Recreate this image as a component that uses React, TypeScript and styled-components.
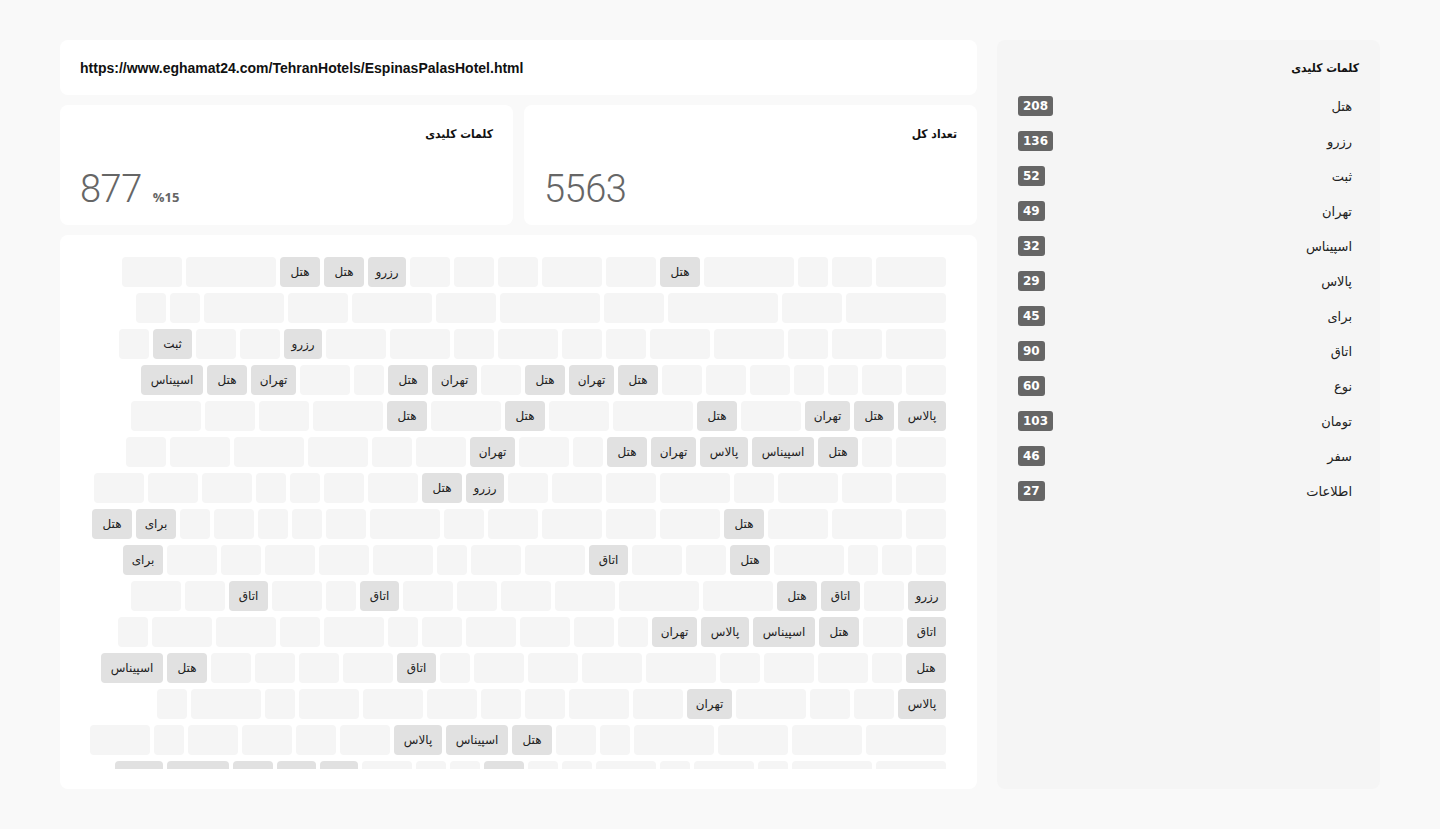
import React from 'react';
import styled, { createGlobalStyle } from 'styled-components';

const GlobalStyle = createGlobalStyle`
  * { box-sizing: border-box; }
  html, body { margin: 0; padding: 0; }
  body {
    background: #f9f9f9;
    font-family: "DejaVu Sans", sans-serif;
    color: #222;
  }
`;

const Page = styled.div`
  direction: rtl;
  display: grid;
  grid-template-columns: 383px 917px;
  grid-template-rows: minmax(0, 1fr);
  gap: 20px;
  padding: 40px 60px;
  height: 829px;
`;

const Sidebar = styled.aside`
  background: #f5f5f5;
  border-radius: 8px;
  padding: 20px 21px;
`;

const SideTitle = styled.h3`
  margin: 0 0 20px;
  font-family: "DejaVu Sans Condensed", "DejaVu Sans", sans-serif;
  font-size: 12px;
  font-weight: bold;
  line-height: 16px;
  color: #111;
`;

const KeywordList = styled.ul`
  list-style: none;
  margin: 0;
  padding: 0 7px 0 0;
  display: flex;
  flex-direction: column;
  gap: 15px;
`;

const KeywordRow = styled.li`
  display: flex;
  justify-content: space-between;
  align-items: center;
  height: 20px;
  font-size: 13px;
  color: #222;
`;

const Count = styled.span`
  background: #666;
  color: #fff;
  font-weight: bold;
  font-size: 12px;
  height: 20px;
  line-height: 20px;
  padding: 0 5px;
  border-radius: 3px;
`;

const Main = styled.main`
  display: flex;
  flex-direction: column;
  gap: 10px;
  min-width: 0;
  min-height: 0;
`;

const Card = styled.div`
  background: #fff;
  border-radius: 8px;
`;

const UrlCard = styled(Card)`
  flex: none;
  height: 55px;
  padding: 0 20px;
  display: flex;
  align-items: center;
  direction: ltr;
  font-family: "Liberation Sans", Arial, sans-serif;
  font-weight: bold;
  font-size: 14px;
  color: #111;
`;

const StatsRow = styled.div`
  flex: none;
  display: grid;
  grid-template-columns: 1fr 1fr;
  gap: 11px;
  height: 120px;
`;

const StatCard = styled(Card)`
  display: flex;
  flex-direction: column;
  justify-content: space-between;
  padding: 21px 20px 17px;
`;

const StatTitle = styled.h4`
  margin: 0;
  font-family: "DejaVu Sans Condensed", "DejaVu Sans", sans-serif;
  font-size: 12px;
  font-weight: bold;
  line-height: 16px;
  color: #111;
`;

const StatValue = styled.div`
  direction: ltr;
  display: flex;
  align-items: baseline;
  gap: 11px;
`;

const BigNumber = styled.span`
  font-family: Roboto, sans-serif;
  font-weight: 300;
  font-size: 38px;
  line-height: 1;
  letter-spacing: -0.5px;
  color: #666;
`;

const Percent = styled.span`
  font-family: "Open Sans", sans-serif;
  font-weight: bold;
  font-size: 13px;
  color: #666;
`;

const CloudCard = styled(Card)`
  flex: 1;
  min-height: 0;
  display: flex;
  padding: 22px 31px 20px 30px;
`;

const Cloud = styled.div`
  flex: 1;
  min-height: 0;
  overflow: hidden;
  display: flex;
  flex-direction: column;
  gap: 6px;
`;

const CloudRow = styled.div`
  display: flex;
  gap: 4px;
  flex-shrink: 0;
`;

const Tile = styled.span<{ $keyword: boolean }>`
  flex: none;
  height: 30px;
  border-radius: 4px;
  background: ${p => (p.$keyword ? '#e1e1e1' : '#f5f5f5')};
  display: flex;
  align-items: center;
  justify-content: center;
  font-size: 12px;
  color: #222;
  white-space: nowrap;
`;

const keywords = [
    { word: 'هتل', count: 208 },
    { word: 'رزرو', count: 136 },
    { word: 'ثبت', count: 52 },
    { word: 'تهران', count: 49 },
    { word: 'اسپیناس', count: 32 },
    { word: 'پالاس', count: 29 },
    { word: 'برای', count: 45 },
    { word: 'اتاق', count: 90 },
    { word: 'نوع', count: 60 },
    { word: 'تومان', count: 103 },
    { word: 'سفر', count: 46 },
    { word: 'اطلاعات', count: 27 },
];

const tileWidth: Record<string, number> = {
    'هتل': 40,
    'رزرو': 38,
    'ثبت': 39,
    'تهران': 45,
    'اسپیناس': 62,
    'پالاس': 48,
    'برای': 40,
    'اتاق': 39,
};

// rows read right to left: a number is a plain word (its width only),
// text is a keyword, "*n" is a keyword cut off under the fold
const rows = [
    '70 40 30 90 هتل 50 60 40 40 40 رزرو هتل هتل 90 60',
    '100 60 110 60 100 60 80 60 80 30 30',
    '60 50 40 70 60 40 40 60 40 60 60 رزرو 40 40 ثبت 30',
    '40 40 30 30 40 40 40 هتل تهران هتل 40 تهران هتل 30 50 تهران هتل اسپیناس',
    'پالاس هتل تهران 60 هتل 80 60 هتل 70 هتل 70 50 50 70',
    '50 30 هتل اسپیناس پالاس تهران هتل 30 50 تهران 50 40 60 70 60 40',
    '50 50 60 40 70 50 50 40 رزرو هتل 50 40 30 30 50 50 50',
    '40 70 60 هتل 60 50 60 50 40 70 40 30 30 40 30 برای هتل',
    '30 30 30 70 هتل 40 50 اتاق 60 50 30 60 50 50 40 50 برای',
    'رزرو 40 اتاق هتل 70 80 60 50 40 50 اتاق 30 50 اتاق 40 50',
    'اتاق 40 هتل اسپیناس پالاس تهران 30 40 50 50 40 30 60 40 60 60 30',
    'هتل 30 50 50 40 70 60 50 50 30 اتاق 50 40 40 40 هتل اسپیناس',
    'پالاس 40 40 70 تهران 50 60 40 40 50 60 60 30 70 30',
    '80 70 70 80 30 40 هتل اسپیناس پالاس 50 40 50 50 30 60',
    '70 80 30 60 30 60 30 30 *40 30 30 50 *38 *39 *40 *62 *48',
];

function parseToken(t: string) {
    if (t.startsWith('*')) return { keyword: true, label: null, width: Number(t.slice(1)) };
    if (isNaN(Number(t))) return { keyword: true, label: t, width: tileWidth[t] };
    return { keyword: false, label: null, width: Number(t) };
}

export default function App() {
    return (
        <>
            <GlobalStyle />
            <Page>
                <Sidebar>
                    <SideTitle>کلمات کلیدی</SideTitle>
                    <KeywordList>
                        {keywords.map(k => (
                            <KeywordRow key={k.word}>
                                <span>{k.word}</span>
                                <Count>{k.count}</Count>
                            </KeywordRow>
                        ))}
                    </KeywordList>
                </Sidebar>
                <Main>
                    <UrlCard>https://www.eghamat24.com/TehranHotels/EspinasPalasHotel.html</UrlCard>
                    <StatsRow>
                        <StatCard>
                            <StatTitle>تعداد کل</StatTitle>
                            <StatValue>
                                <BigNumber>5563</BigNumber>
                            </StatValue>
                        </StatCard>
                        <StatCard>
                            <StatTitle>کلمات کلیدی</StatTitle>
                            <StatValue>
                                <BigNumber>877</BigNumber>
                                <Percent>%15</Percent>
                            </StatValue>
                        </StatCard>
                    </StatsRow>
                    <CloudCard>
                        <Cloud>
                            {rows.map((row, i) => (
                                <CloudRow key={i}>
                                    {row.split(' ').map((t, j) => {
                                        const tile = parseToken(t);
                                        return (
                                            <Tile key={j} $keyword={tile.keyword} style={{ width: tile.width }}>
                                                {tile.label}
                                            </Tile>
                                        );
                                    })}
                                </CloudRow>
                            ))}
                        </Cloud>
                    </CloudCard>
                </Main>
            </Page>
        </>
    );
}
